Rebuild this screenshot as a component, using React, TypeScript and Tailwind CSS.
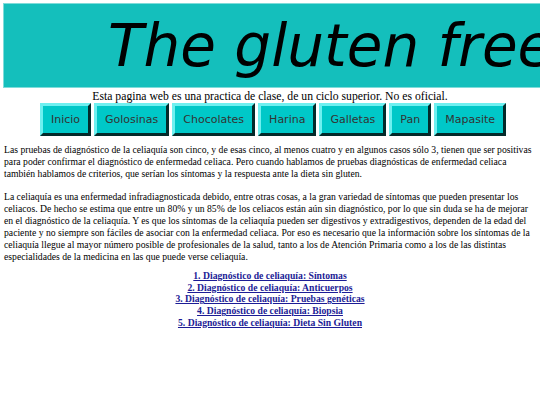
import React from 'react';

const menu = ['Inicio', 'Golosinas', 'Chocolates', 'Harina', 'Galletas', 'Pan', 'Mapasite'];

const links = [
  '1. Diagnóstico de celiaquía: Síntomas',
  '2. Diagnóstico de celiaquía: Anticuerpos',
  '3. Diagnóstico de celiaquía: Pruebas genéticas',
  '4. Diagnóstico de celiaquía: Biopsia',
  '5. Diagnóstico de celiaquía: Dieta Sin Gluten',
];

export default function App() {
  return (
    <div className="w-[540px] h-[405px] overflow-hidden bg-white text-black font-['Liberation_Serif',serif]">
      {/* Header box runs past the right edge, as in the original page */}
      <div className="pt-[3px] pl-[3px] overflow-hidden">
        <div className="w-[700px] h-[85px] bg-[#14bfbc] border border-[#7fdcda] flex items-center pl-[104px]">
          <h1 className="font-['DejaVu_Sans',sans-serif] italic text-[58px] leading-none whitespace-nowrap">
            The gluten free
          </h1>
        </div>
      </div>

      <p className="text-center text-[11.7px] leading-[12px] mt-[3px]">
        Esta pagina web es una practica de clase, de un ciclo superior. No es oficial.
      </p>

      <nav className="flex justify-center gap-[3px] pl-[6px]">
        {menu.map((item) => (
          <a
            key={item}
            href="#"
            className="block bg-[#00c8c8] border-[3px] border-t-[#6ff0f0] border-l-[#6ff0f0] border-b-[#042a2a] border-r-[#042a2a] px-[8px] py-[7px] font-['DejaVu_Sans',sans-serif] text-[11px] leading-[13px] text-[#333]"
          >
            {item}
          </a>
        ))}
      </nav>

      <div className="px-[4px] pt-[8px] text-[9.68px] leading-[12px]">
        <p>
          Las pruebas de diagnóstico de la celiaquía son cinco, y de esas cinco, al menos cuatro y en algunos casos sólo 3, tienen que ser positivas
          para poder confirmar el diagnóstico de enfermedad celiaca. Pero cuando hablamos de pruebas diagnósticas de enfermedad celiaca
          también hablamos de criterios, que serían los síntomas y la respuesta ante la dieta sin gluten.
        </p>
        <p className="mt-[11px]">
          La celiaquía es una enfermedad infradiagnosticada debido, entre otras cosas, a la gran variedad de síntomas que pueden presentar los
          celiacos. De hecho se estima que entre un 80% y un 85% de los celiacos están aún sin diagnóstico, por lo que sin duda se ha de mejorar
          en el diagnóstico de la celiaquía. Y es que los síntomas de la celiaquía pueden ser digestivos y extradigestivos, dependen de la edad del
          paciente y no siempre son fáciles de asociar con la enfermedad celiaca. Por eso es necesario que la información sobre los síntomas de la
          celiaquía llegue al mayor número posible de profesionales de la salud, tanto a los de Atención Primaria como a los de las distintas
          especialidades de la medicina en las que puede verse celiaquía.
        </p>

        <ul className="mt-[7px] flex flex-col items-center leading-[11.7px]">
          {links.map((link) => (
            <li key={link}>
              <a href="#" className="font-bold underline text-[#1c1c96]">
                {link}
              </a>
            </li>
          ))}
        </ul>
      </div>
    </div>
  );
}
